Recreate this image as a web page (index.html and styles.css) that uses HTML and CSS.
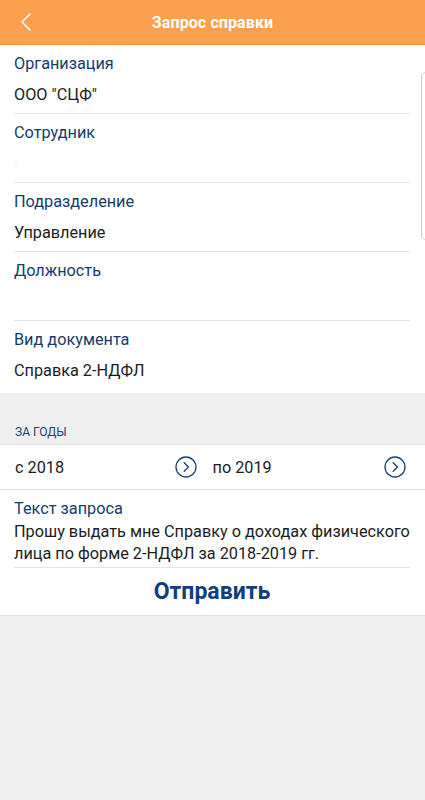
FILE: index.html
```html
<!DOCTYPE html>
<html lang="ru">
<head>
<meta charset="utf-8">
<link rel="stylesheet" href="styles.css">
</head>
<body>
<header class="topbar">
  <span class="back">
    <svg width="12" height="20" viewBox="0 0 12 20"><path d="M10 2 L2 10 L10 18" fill="none" stroke="#fff" stroke-width="1.6" stroke-linecap="round" stroke-linejoin="round"/></svg>
  </span>
  <h1 class="title">Запрос справки</h1>
</header>
<main class="page">
  <section class="card">
    <div class="field"><div class="label">Организация</div><div class="value">ООО "СЦФ"</div></div>
    <div class="field"><div class="label">Сотрудник</div><div class="value faint">·</div></div>
    <div class="field"><div class="label">Подразделение</div><div class="value">Управление</div></div>
    <div class="field"><div class="label">Должность</div><div class="value">&nbsp;</div></div>
    <div class="field last"><div class="label">Вид документа</div><div class="value">Справка 2-НДФЛ</div></div>
    <div class="handle"></div>
  </section>
  <div class="group">ЗА ГОДЫ</div>
  <section class="years">
    <div class="year"><span>с 2018</span>
      <svg class="arrow" width="22" height="22" viewBox="0 0 22 22"><circle cx="11" cy="11" r="10" fill="none" stroke="#1c4272" stroke-width="1.3"/><path d="M9.2 6.8 L13.4 11 L9.2 15.2" fill="none" stroke="#1c4272" stroke-width="1.4" stroke-linecap="round" stroke-linejoin="round"/></svg>
    </div>
    <div class="year"><span>по 2019</span>
      <svg class="arrow" width="22" height="22" viewBox="0 0 22 22"><circle cx="11" cy="11" r="10" fill="none" stroke="#1c4272" stroke-width="1.3"/><path d="M9.2 6.8 L13.4 11 L9.2 15.2" fill="none" stroke="#1c4272" stroke-width="1.4" stroke-linecap="round" stroke-linejoin="round"/></svg>
    </div>
  </section>
  <section class="request">
    <div class="label">Текст запроса</div>
    <p class="text">Прошу выдать мне Справку о доходах физического лица по форме 2-НДФЛ за 2018-2019 гг.</p>
    <button class="send">Отправить</button>
  </section>
</main>
</body>
</html>
```
FILE: styles.css
```css
* { box-sizing: border-box; margin: 0; padding: 0; }
html, body { height: 100%; }
body {
  font-family: Roboto, "Noto Sans", Arial, sans-serif;
  background: #efefef;
  color: #1e1e1e;
}
.topbar {
  height: 45px;
  background: #fba04c;
  display: flex;
  align-items: center;
  justify-content: center;
  position: relative;
  border-bottom: 1px solid #e8913f;
}
.back {
  position: absolute;
  left: 20px;
  top: 12px;
  display: flex;
}
.title {
  color: #fff;
  font-size: 16px;
  font-weight: 700;
  letter-spacing: 0.1px;
}
.card {
  background: #fff;
  padding: 0 15px 0 14px;
  position: relative;
}
.field {
  height: 69px;
  border-bottom: 1px solid #e4e4e4;
  padding-top: 9px;
}
.field.last { border-bottom: none; height: 72px; }
.label {
  color: #163c6e;
  font-size: 16.25px;
  line-height: 19px;
}
.value {
  font-size: 16.25px;
  line-height: 19px;
  margin-top: 12px;
  color: #1c1c1c;
}
.faint { color: #e6e6e6; }
.handle {
  position: absolute;
  right: -6px;
  top: 27px;
  width: 10px;
  height: 168px;
  border: 1px solid #c9c9c9;
  border-radius: 6px;
}
.group {
  height: 51px;
  padding: 31px 0 0 15px;
  font-size: 12px;
  color: #1c4272;
  line-height: 16px;
}
.years {
  background: #fff;
  display: flex;
  height: 46px;
  border-bottom: 1px solid #dedede;
  border-top: 1px solid #e6e6e6;
}
.year {
  flex: none;
  width: 50%;
  display: flex;
  align-items: center;
  justify-content: space-between;
  font-size: 16.25px;
  color: #1c1c1c;
}
.year:first-child { padding: 0 16px 0 15px; }
.year:last-child { padding: 0 19px 0 0; }
.request {
  background: #fff;
  padding: 9px 15px 0 14px;
  border-bottom: 1px solid #dddddd;
}
.request .label { line-height: 19px; }
.text {
  font-size: 16.25px;
  line-height: 22px;
  margin-top: 3px;
  padding-bottom: 2px;
  border-bottom: 1px solid #e4e4e4;
  color: #1c1c1c;
}
.send {
  display: block;
  width: 100%;
  height: 47px;
  background: none;
  border: none;
  font-family: inherit;
  font-size: 23px;
  font-weight: 700;
  color: #0f3f7c;
}
```
